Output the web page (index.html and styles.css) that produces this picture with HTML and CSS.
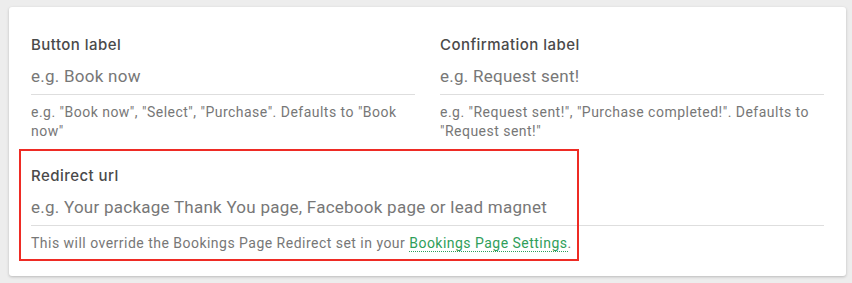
FILE: index.html
```html
<!DOCTYPE html>
<html lang="en">
<head>
<meta charset="utf-8">
<title>Button settings</title>
<link rel="stylesheet" href="styles.css">
</head>
<body>
<div class="card">
  <div class="row">
    <div class="field">
      <div class="label">Button label</div>
      <div class="input">e.g. Book now</div>
      <div class="help">e.g. "Book now", "Select", "Purchase". Defaults to "Book now"</div>
    </div>
    <div class="field">
      <div class="label">Confirmation label</div>
      <div class="input">e.g. Request sent!</div>
      <div class="help">e.g. "Request sent!", "Purchase completed!". Defaults to "Request sent!"</div>
    </div>
  </div>
  <div class="field field-full">
    <div class="highlight"></div>
    <div class="label">Redirect url</div>
    <div class="input">e.g. Your package Thank You page, Facebook page or lead magnet</div>
    <div class="help">This will override the Bookings Page Redirect set in your <a class="link" href="#">Bookings Page Settings</a>.</div>
  </div>
</div>
</body>
</html>
```
FILE: styles.css
```css
html, body {
  margin: 0;
  padding: 0;
}
body {
  background: #ededed;
  padding: 7px 6px 7px 9px;
  font-family: Roboto, "Liberation Sans", sans-serif;
}
.card {
  width: 837px;
  height: 269px;
  box-sizing: border-box;
  background: #fff;
  border-radius: 3px;
  box-shadow: 0 1px 3px rgba(0, 0, 0, 0.22);
  padding: 28px 22px 0 22px;
}
.row {
  display: grid;
  grid-template-columns: 384px 384px;
  column-gap: 25px;
}
.field {
  position: relative;
}
.field-full {
  margin-top: 25px;
}
.label {
  font-family: Inter, "Noto Sans", sans-serif;
  font-weight: 500;
  font-size: 15px;
  line-height: 20px;
  color: #4a4a4a;
  letter-spacing: 0.45px;
}
.input {
  margin-top: 9px;
  font-size: 17px;
  line-height: 24px;
  letter-spacing: 0.25px;
  color: #777;
  padding-bottom: 6px;
  border-bottom: 1px solid #dedede;
}
.help {
  margin-top: 8px;
  font-size: 14px;
  line-height: 19px;
  letter-spacing: 0.48px;
  color: #777;
}
.link {
  color: #2f9e5a;
  text-decoration: none;
  border-bottom: 1px dotted #2f9e5a;
}
.highlight {
  position: absolute;
  left: -12px;
  top: -17px;
  width: 560px;
  height: 112px;
  box-sizing: border-box;
  border: 2px solid #ee2b24;
  pointer-events: none;
}
```
